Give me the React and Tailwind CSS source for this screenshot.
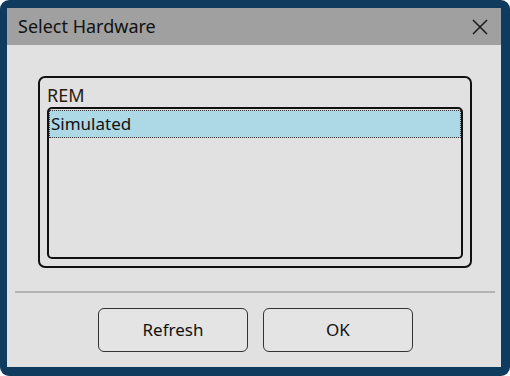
export default function App() {
  return (
    <div className="w-[510px] h-[376px] bg-white" style={{ fontFamily: '"Noto Sans", "Open Sans", sans-serif' }}>
      <div className="flex h-full w-full flex-col rounded-[9px] bg-[#0f3b5f] pt-[8px] pl-[7px] pr-[9px] pb-[9px]">
        <div className="flex h-[37px] items-center justify-between bg-[#a0a0a0] pl-[11px] pr-[13px]">
          <span className="text-[18px] text-[#111]">Select Hardware</span>
          <svg width="16" height="16" viewBox="0 0 16 16" className="mt-[1px]">
            <path d="M1 1 L15 15 M15 1 L1 15" stroke="#1a1a1a" strokeWidth="1.5" fill="none" />
          </svg>
        </div>
        <div className="flex flex-1 flex-col bg-[#e1e1e1]">
          <div className="ml-[31px] mr-[29px] mt-[31px] flex h-[192px] flex-col rounded-[7px] border-2 border-[#111] px-[7px] pb-[7px]">
            <div className="h-[29px] pt-[7px] text-[18px] leading-[20px] text-[#2a1a0a]">REM</div>
            <div className="flex-1 rounded-[5px] border-2 border-[#111] bg-[#e1e1e1] pt-[1px]">
              <div className="h-[28px] border border-dotted border-[#333] bg-[#add8e6] pl-[1px] text-[17px] leading-[25px] text-[#111]">
                Simulated
              </div>
            </div>
          </div>
          <div className="ml-[8px] mr-[6px] mt-[23px] h-[2px] bg-[#b4b4b4]" />
          <div className="mt-[15px] flex gap-[15px] pl-[91px]">
            <button className="h-[44px] w-[150px] rounded-[6px] border border-[#333] bg-[#e4e4e4] text-[17px] text-[#111]">
              Refresh
            </button>
            <button className="h-[44px] w-[150px] rounded-[6px] border border-[#333] bg-[#e4e4e4] text-[17px] text-[#111]">
              OK
            </button>
          </div>
        </div>
      </div>
    </div>
  );
}
